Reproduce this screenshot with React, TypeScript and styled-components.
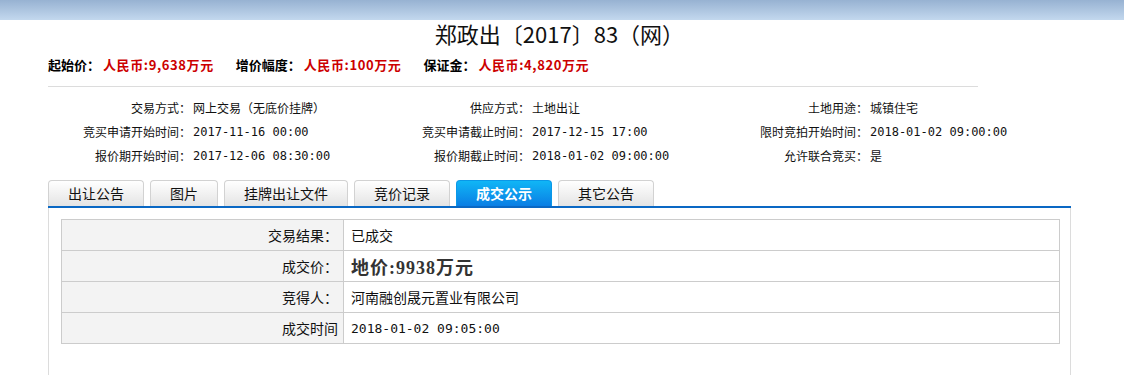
import React from 'react';
import styled, { createGlobalStyle } from 'styled-components';

const GlobalStyle = createGlobalStyle`
  body {
    margin: 0;
    background: #fff;
    font-family: "Noto Sans CJK SC", sans-serif;
    color: #000;
  }
`;

const mono = `"DejaVu Sans Mono", "Noto Sans CJK SC", monospace`;

// top banner
const TopBar = styled.div`
  height: 20px;
  background: linear-gradient(#97b2d2, #c3d8ee);
`;

const Wrapper = styled.div`
  margin-left: 48px;
  width: 1023px;
`;

const Title = styled.h1`
  margin: 0;
  height: 26px;
  line-height: 26px;
  text-align: center;
  font-size: 22px;
  font-weight: normal;
  color: #111;
`;

const PriceLine = styled.div`
  margin-top: 8px;
  height: 20px;
  display: flex;
  align-items: center;
  gap: 22px;
  font-size: 13px;
  font-weight: bold;
`;

const PriceItem = styled.span`
  color: #000;
`;

const PriceValue = styled.span`
  color: #cc0000;
  margin-left: 3px;
  letter-spacing: 0.6px;
`;

const Divider = styled.div`
  width: 930px;
  margin-top: 12px;
  border-top: 1px solid #dcdcdc;
`;

// basic info grid: label / value pairs in 3 columns
const InfoGrid = styled.div`
  width: 930px;
  padding-top: 9px;
  display: grid;
  grid-template-columns: 143px 167px 172px 138px 200px 110px;
  grid-auto-rows: 24px;
  font-size: 12px;
  color: #111;
`;

const InfoLabel = styled.div`
  text-align: right;
  line-height: 24px;
  white-space: nowrap;
`;

const InfoValue = styled.div<{ $mono?: boolean }>`
  line-height: 24px;
  white-space: nowrap;
  padding-left: 2px;
  font-family: ${p => (p.$mono ? mono : 'inherit')};
`;

// tabs
const TabBar = styled.div`
  margin-top: 12px;
  display: flex;
  gap: 6px;
  border-bottom: 2px solid #0a68c4;
`;

const Tab = styled.div<{ $active?: boolean }>`
  height: 25px;
  line-height: 24px;
  padding: 0 19px;
  border: 1px solid ${p => (p.$active ? '#0a98e8' : '#d2d2d2')};
  border-bottom: none;
  border-radius: 4px 4px 0 0;
  font-size: 14px;
  font-weight: ${p => (p.$active ? 'bold' : 'normal')};
  color: ${p => (p.$active ? '#fff' : '#111')};
  background: ${p =>
    p.$active
      ? 'linear-gradient(#10b6f6, #0a7ee4)'
      : 'linear-gradient(#ffffff, #e4e4e4)'};
`;

const Panel = styled.div`
  border-left: 1px solid #dcdcdc;
  border-right: 1px solid #dcdcdc;
  padding: 11px 10px 40px 12px;
`;

const ResultTable = styled.table`
  width: 100%;
  border-collapse: collapse;
  font-size: 14px;
  color: #111;
`;

const Row = styled.tr`
  height: 31px;
`;

const LabelCell = styled.td`
  width: 276px;
  border: 1px solid #cccccc;
  background: #f3f3f3;
  text-align: right;
  padding: 0 5px 0 0;
  white-space: nowrap;
`;

const ValueCell = styled.td<{ $mono?: boolean }>`
  border: 1px solid #cccccc;
  padding: 0 0 0 7px;
  font-family: ${p => (p.$mono ? mono : 'inherit')};
  font-size: ${p => (p.$mono ? '13px' : '14px')};
`;

const LandPrice = styled.span`
  font-family: "Liberation Serif", "Noto Sans CJK SC", serif;
  font-size: 18px;
  font-weight: bold;
  color: #333;
  letter-spacing: 1px;
`;

const info: [string, string, boolean?][] = [
  ['交易方式：', '网上交易（无底价挂牌）'],
  ['供应方式：', '土地出让'],
  ['土地用途：', '城镇住宅'],
  ['竞买申请开始时间：', '2017-11-16 00:00', true],
  ['竞买申请截止时间：', '2017-12-15 17:00', true],
  ['限时竞拍开始时间：', '2018-01-02 09:00:00', true],
  ['报价期开始时间：', '2017-12-06 08:30:00', true],
  ['报价期截止时间：', '2018-01-02 09:00:00', true],
  ['允许联合竞买：', '是'],
];

const tabs = ['出让公告', '图片', '挂牌出让文件', '竞价记录', '成交公示', '其它公告'];

export default function App() {
  return (
    <>
      <GlobalStyle />
      <TopBar />
      <Wrapper>
        <Title>郑政出〔2017〕83（网）</Title>
        <PriceLine>
          <PriceItem>
            起始价：<PriceValue>人民币:9,638万元</PriceValue>
          </PriceItem>
          <PriceItem>
            增价幅度：<PriceValue>人民币:100万元</PriceValue>
          </PriceItem>
          <PriceItem>
            保证金：<PriceValue>人民币:4,820万元</PriceValue>
          </PriceItem>
        </PriceLine>
        <Divider />
        <InfoGrid>
          {info.map(([label, value, isMono]) => (
            <React.Fragment key={label}>
              <InfoLabel>{label}</InfoLabel>
              <InfoValue $mono={isMono}>{value}</InfoValue>
            </React.Fragment>
          ))}
        </InfoGrid>
        <TabBar>
          {tabs.map(t => (
            <Tab key={t} $active={t === '成交公示'}>
              {t}
            </Tab>
          ))}
        </TabBar>
        <Panel>
          <ResultTable>
            <tbody>
              <Row>
                <LabelCell>交易结果：</LabelCell>
                <ValueCell>已成交</ValueCell>
              </Row>
              <Row>
                <LabelCell>成交价：</LabelCell>
                <ValueCell>
                  <LandPrice>地价:9938万元</LandPrice>
                </ValueCell>
              </Row>
              <Row>
                <LabelCell>竞得人：</LabelCell>
                <ValueCell>河南融创晟元置业有限公司</ValueCell>
              </Row>
              <Row>
                <LabelCell>成交时间</LabelCell>
                <ValueCell $mono>2018-01-02 09:05:00</ValueCell>
              </Row>
            </tbody>
          </ResultTable>
        </Panel>
      </Wrapper>
    </>
  );
}
